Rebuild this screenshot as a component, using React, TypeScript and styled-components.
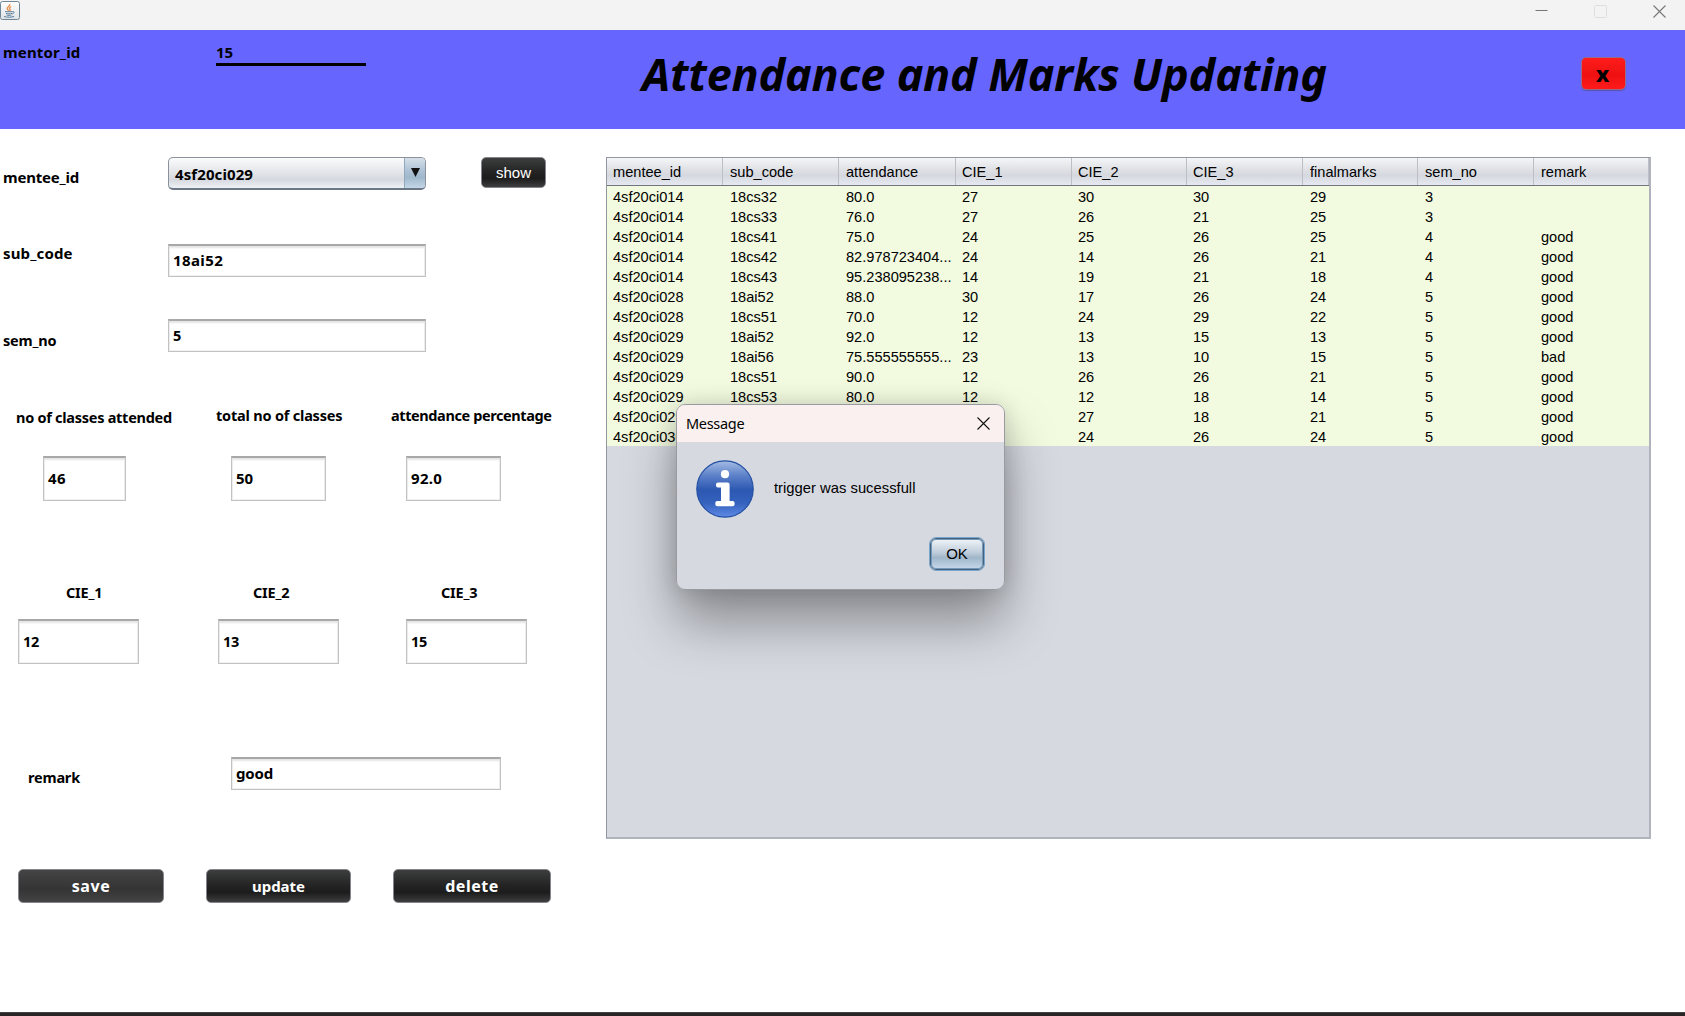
import React from "react";
import styled, { createGlobalStyle } from "styled-components";

const Global = createGlobalStyle`
  *{box-sizing:border-box}
  html,body{margin:0;background:#fff;overflow:hidden}
  body{font-family:"Liberation Sans",Arial,sans-serif;color:#000}
`;

const humanist = `"Noto Sans","Open Sans",sans-serif`;

const Window = styled.main`
  position: relative;
  width: 1685px;
  height: 1016px;
  display: flex;
  flex-direction: column;
  background: #fff;
  overflow: hidden;
`;
const TitleBar = styled.header`
  height: 30px;
  flex: none;
  display: flex;
  align-items: flex-start;
  justify-content: space-between;
  background: #f3f3f3;
`;
const WindowControls = styled.div`
  display: flex;
  gap: 46px;
  padding: 5px 19px 0 0;
`;
const Banner = styled.section`
  height: 99px;
  flex: none;
  display: flex;
  align-items: flex-start;
  background: #6666ff;
`;
const BannerLabel = styled.div`
  width: 216px;
  padding: 11px 0 0 3px;
`;
const MentorField = styled.div`
  width: 150px;
  height: 36px;
  padding-top: 11px;
  border-bottom: 3px solid #000;
`;
const Txt = styled.span<{ $size?: number; $ls?: number; $weight?: number }>`
  display: block;
  white-space: nowrap;
  font-family: ${humanist};
  font-weight: ${(p) => p.$weight ?? 700};
  font-size: ${(p) => p.$size ?? 14.5}px;
  line-height: 22px;
  letter-spacing: ${(p) => p.$ls ?? -0.2}px;
`;
const Heading = styled.h1`
  margin: 13px 0 0 276px;
  width: 699px;
  font: italic 700 45px/62px ${humanist};
  letter-spacing: -0.17px;
  white-space: nowrap;
`;
const CloseButton = styled.button`
  margin: 27px 0 0 240px;
  width: 45px;
  height: 33px;
  padding: 0 2px 2px 0;
  border: 1px solid #9a6a8c;
  border-radius: 5px;
  background: linear-gradient(#ff1c1c, #ee1111 55%, #ff1a1a);
  box-shadow: 0 1px 1px #5555aa;
  font: 800 22px/28px ${humanist};
`;
const Body = styled.div`
  flex: 1;
  display: flex;
  align-items: flex-start;
`;
const Form = styled.form`
  width: 606px;
  display: flex;
  flex-direction: column;
`;
const Line = styled.div<{ $h: number }>`
  height: ${(p) => p.$h}px;
  display: flex;
  align-items: flex-start;
`;
const Cell = styled.div<{ $w: number; $x?: number; $y?: number }>`
  width: ${(p) => p.$w}px;
  flex: none;
  padding: ${(p) => p.$y ?? 0}px 0 0 ${(p) => p.$x ?? 0}px;
`;
const Field = styled.div<{ $w: number; $h: number }>`
  width: ${(p) => p.$w}px;
  height: ${(p) => p.$h}px;
  display: flex;
  align-items: center;
  padding: 0 0 2px 4px;
  border: 1px solid #c2c2c2;
  border-top: 2px solid #a8a8a8;
  background: #fff;
  box-shadow: inset 0 2px 2px #e4e4e4, inset 0 0 0 1px #f1f1f1;
`;
const Combo = styled.div`
  width: 258px;
  height: 33px;
  display: flex;
  justify-content: space-between;
  border: 1px solid #8b929b;
  border-bottom: 2px solid #6b7784;
  border-radius: 5px;
  overflow: hidden;
  background: linear-gradient(#fbfbfc, #e3e5e9 48%, #d5d8de 72%, #eef1f6);
  padding-left: 6px;
`;
const ComboText = styled.div`
  padding-top: 5px;
`;
const ComboArrow = styled.div`
  width: 21px;
  border-left: 1px solid #8fa9be;
  background: linear-gradient(#d5e0ea, #abc0d3 45%, #a0b8cc 65%, #c4d7e8);
  display: flex;
  justify-content: center;
  padding-top: 10px;
`;
const DarkButton = styled.button<{ $w: number; $h: number; $hover?: boolean }>`
  width: ${(p) => p.$w}px;
  height: ${(p) => p.$h}px;
  display: flex;
  align-items: center;
  justify-content: center;
  padding: 0 0 1px;
  color: #fff;
  font: 15px "Liberation Sans", sans-serif;
  border: 1px solid #85858b;
  border-radius: 5px;
  background: ${(p) =>
    p.$hover
      ? "linear-gradient(#444, #343434 60%, #444)"
      : "linear-gradient(#3d3e3e, #252525 45%, #1c1c1c 70%, #3e3e3e)"};
`;
const Table = styled.section`
  margin-top: 28px;
  width: 1045px;
  height: 682px;
  background: #d6d9e0;
  border: 1px solid #9297a1;
  border-right: 2px solid #b0b3bb;
  border-bottom: 2px solid #b0b3bb;
`;
const columns = "116px 116px 117px 116px 115px 116px 115px 116px 115px";
const TableHead = styled.div`
  height: 28px;
  display: grid;
  grid-template-columns: ${columns};
  border-bottom: 1px solid #6f747e;
  background: linear-gradient(#f5f6f8, #e0e2e6 40%, #d5d8de 65%, #e6e9f1);
`;
const HeadCell = styled.div<{ $pad: number }>`
  padding: 1px 0 1px ${(p) => p.$pad}px;
  display: flex;
  align-items: center;
  font-size: 14.6px;
  border-right: 1px solid #bcbfc6;
`;
const Row = styled.div`
  height: 20px;
  display: grid;
  grid-template-columns: ${columns};
  background: #f2fadf;
`;
const RowCell = styled.div<{ $pad: number }>`
  height: 20px;
  padding-left: ${(p) => p.$pad}px;
  font-size: 14.6px;
  line-height: 22px;
  white-space: nowrap;
`;
const Taskbar = styled.footer`
  height: 4px;
  flex: none;
  background: #262424;
  border-top: 1px solid #444;
`;
const Dialog = styled.div`
  position: absolute;
  left: 676px;
  top: 404px;
  width: 329px;
  height: 186px;
  border: 1px solid #999ba0;
  border-radius: 9px;
  overflow: hidden;
  background: #d6d9e0;
`;
const DialogShadow = styled.div`
  position: absolute;
  left: 676px;
  top: 404px;
  width: 329px;
  height: 186px;
  border-radius: 9px;
  box-shadow: 0 32px 52px rgba(0, 0, 0, 0.36), 0 0 22px rgba(0, 0, 0, 0.15);
`;
const DialogTitle = styled.div`
  height: 37px;
  display: flex;
  justify-content: space-between;
  padding: 7px 14px 0 9px;
  background: #f9f0ef;
`;
const DialogContent = styled.div`
  height: 96px;
  display: flex;
  padding: 18px 0 0 19px;
  gap: 20px;
`;
const Message = styled.div`
  padding-top: 18px;
  font-size: 14.8px;
  line-height: 20px;
`;
const DialogActions = styled.div`
  display: flex;
  justify-content: flex-end;
  padding-right: 20px;
`;
const OkButton = styled.button`
  width: 54px;
  height: 32px;
  padding: 0 0 1px;
  font: 15px "Liberation Sans", sans-serif;
  border: 1px solid #45617b;
  border-radius: 6px;
  outline: 1px solid #7ba6cb;
  background: linear-gradient(#f0f4f8, #bfcddb 45%, #a0b6c9 62%, #c5d8ea);
  box-shadow: inset 0 0 0 1px #7299bc;
`;

const JavaIcon = () => (
  <svg width="20" height="21" viewBox="0 0 20 21" fill="none">
    <defs>
      <linearGradient id="tile" x2="0" y2="1">
        <stop stopColor="#fff" />
        <stop offset="1" stopColor="#dfe3e6" />
      </linearGradient>
    </defs>
    <rect x=".5" y="1.5" width="19" height="18" rx="2" fill="url(#tile)" stroke="#6d8798" />
    <path d="M9.800 4c.6 2.200-3.300 2.900-2.500 4.900.300.800 1 1.300 1.200 2M11.200 6.500c-1.500.8-2.200 1.700-1.300 2.700.5.600.2 1.200-.3 1.700" stroke="#e8914e" strokeWidth="1.400" />
    <path d="M5 11.700h7.500M6 13.400c1.700.600 4.500.500 6 0M6.500 15c1.500.500 3.700.5 5 0M12.400 11.700c2.200-.8 2.200 1.600-.2 2.300M4 16.500c2.700 1 8 .900 10-.1" stroke="#5c7f9c" />
  </svg>
);
const Cross = ({ color }: { color: string }) => (
  <svg width="13" height="13" viewBox="0 0 13 13" stroke={color} strokeWidth="1.100">
    <path d="M.5.500l12 12M12.500.500l-12 12" />
  </svg>
);
const InfoIcon = () => (
  <svg width="58" height="58" viewBox="0 0 58 58">
    <defs>
      <linearGradient id="info" x2="0" y2="1">
        <stop stopColor="#a5bce4" />
        <stop offset=".25" stopColor="#5f83ca" />
        <stop offset=".52" stopColor="#2c58b2" />
        <stop offset=".75" stopColor="#3462bd" />
        <stop offset="1" stopColor="#5e8ae6" />
      </linearGradient>
    </defs>
    <circle cx="29" cy="29" r="28.200" fill="url(#info)" stroke="#2450a2" strokeWidth="1.200" />
    <circle cx="29" cy="14.200" r="4.100" fill="#fff" />
    <path d="M22 22.500h9.600q2 0 2 2V41h3q2 0 2 2v1.300q0 2-2 2H21.300q-2 0-2-2V43q0-2 2-2H25V27.500h-3q-2 0-2-2v-1q0-2 2-2z" fill="#fff" />
  </svg>
);

const heads = ["mentee_id", "sub_code", "attendance", "CIE_1", "CIE_2", "CIE_3", "finalmarks", "sem_no", "remark"];
const cellPads = [6, 7, 7, 6, 6, 6, 7, 7, 7];
const rows = [
  ["4sf20ci014", "18cs32", "80.0", "27", "30", "30", "29", "3", ""],
  ["4sf20ci014", "18cs33", "76.0", "27", "26", "21", "25", "3", ""],
  ["4sf20ci014", "18cs41", "75.0", "24", "25", "26", "25", "4", "good"],
  ["4sf20ci014", "18cs42", "82.978723404...", "24", "14", "26", "21", "4", "good"],
  ["4sf20ci014", "18cs43", "95.238095238...", "14", "19", "21", "18", "4", "good"],
  ["4sf20ci028", "18ai52", "88.0", "30", "17", "26", "24", "5", "good"],
  ["4sf20ci028", "18cs51", "70.0", "12", "24", "29", "22", "5", "good"],
  ["4sf20ci029", "18ai52", "92.0", "12", "13", "15", "13", "5", "good"],
  ["4sf20ci029", "18ai56", "75.555555555...", "23", "13", "10", "15", "5", "bad"],
  ["4sf20ci029", "18cs51", "90.0", "12", "26", "26", "21", "5", "good"],
  ["4sf20ci029", "18cs53", "80.0", "12", "12", "18", "14", "5", "good"],
  ["4sf20ci029", "", "", "", "27", "18", "21", "5", "good"],
  ["4sf20ci030", "", "", "", "24", "26", "24", "5", "good"],
];

export default function App() {
  return (
    <Window>
      <Global />
      <TitleBar>
        <JavaIcon />
        <WindowControls>
          <svg width="13" height="13" stroke="#777"><path d="M.5 5.500h12" /></svg>
          <svg width="13" height="13" fill="none" stroke="#dedede"><rect x=".5" y=".5" width="12" height="12" rx="1" /></svg>
          <Cross color="#777" />
        </WindowControls>
      </TitleBar>
      <Banner>
        <BannerLabel><Txt $size={15} $ls={0.15}>mentor_id</Txt></BannerLabel>
        <MentorField><Txt $size={15}>15</Txt></MentorField>
        <Heading>Attendance and Marks Updating</Heading>
        <CloseButton>x</CloseButton>
      </Banner>
      <Body>
        <Form>
          <Line $h={113}>
            <Cell $w={168} $x={3} $y={37}><Txt $size={15} $ls={-0.2}>mentee_id</Txt></Cell>
            <Cell $w={313} $y={28}>
              <Combo>
                <ComboText><Txt $size={15} $ls={0.1}>4sf20ci029</Txt></ComboText>
                <ComboArrow><svg width="9" height="9"><path d="M0 0h9L4.500 9z" fill="#111" /></svg></ComboArrow>
              </Combo>
            </Cell>
            <Cell $w={66} $y={28}><DarkButton type="button" $w={65} $h={31}>show</DarkButton></Cell>
          </Line>
          <Line $h={77}>
            <Cell $w={168} $x={3}><Txt $size={15} $ls={0.15}>sub_code</Txt></Cell>
            <Cell $w={258} $y={2}><Field $w={258} $h={33}><Txt $size={15} $ls={0.4}>18ai52</Txt></Field></Cell>
          </Line>
          <Line $h={85}>
            <Cell $w={168} $x={3} $y={10}><Txt>sem_no</Txt></Cell>
            <Field $w={258} $h={33}><Txt>5</Txt></Field>
          </Line>
          <Line $h={52}>
            <Cell $w={216} $x={16} $y={2}><Txt $ls={-0.27}>no of classes attended</Txt></Cell>
            <Cell $w={175}><Txt $ls={-0.2}>total no of classes</Txt></Cell>
            <Cell $w={180}><Txt $ls={-0.4}>attendance percentage</Txt></Cell>
          </Line>
          <Line $h={125}>
            <Cell $w={231} $x={43}><Field $w={83} $h={45}><Txt $size={15} $ls={0.3}>46</Txt></Field></Cell>
            <Cell $w={175}><Field $w={95} $h={45}><Txt $size={15}>50</Txt></Field></Cell>
            <Field $w={95} $h={45}><Txt $size={15} $ls={0.3}>92.0</Txt></Field>
          </Line>
          <Line $h={38}>
            <Cell $w={253} $x={66}><Txt>CIE_1</Txt></Cell>
            <Cell $w={188}><Txt>CIE_2</Txt></Cell>
            <Cell $w={60}><Txt>CIE_3</Txt></Cell>
          </Line>
          <Line $h={138}>
            <Cell $w={218} $x={18}><Field $w={121} $h={45}><Txt>12</Txt></Field></Cell>
            <Cell $w={188}><Field $w={121} $h={45}><Txt>13</Txt></Field></Cell>
            <Field $w={121} $h={45}><Txt>15</Txt></Field>
          </Line>
          <Line $h={112}>
            <Cell $w={231} $x={28} $y={9}><Txt>remark</Txt></Cell>
            <Field $w={270} $h={33}><Txt $size={15}>good</Txt></Field>
          </Line>
          <Line $h={40}>
            <Cell $w={206} $x={18}><DarkButton type="button" $hover $w={146} $h={34}><Txt $size={16} $ls={0.6}>save</Txt></DarkButton></Cell>
            <Cell $w={187}><DarkButton type="button" $w={145} $h={34}><Txt $size={15} $ls={0}>update</Txt></DarkButton></Cell>
            <DarkButton type="button" $w={158} $h={34}><Txt $size={16} $ls={0.5}>delete</Txt></DarkButton>
          </Line>
        </Form>
        <Table>
          <TableHead>{heads.map((h, j) => <HeadCell key={h} $pad={cellPads[j]}>{h}</HeadCell>)}</TableHead>
          {rows.map((r, i) => (
            <Row key={i}>{r.map((c, j) => <RowCell key={j} $pad={cellPads[j]}>{c}</RowCell>)}</Row>
          ))}
        </Table>
      </Body>
      <Taskbar />
      <DialogShadow />
      <Dialog>
        <DialogTitle>
          <Txt $weight={400} $ls={-0.3}>Message</Txt>
          <Cell $w={13} $y={4}><Cross color="#111" /></Cell>
        </DialogTitle>
        <DialogContent>
          <InfoIcon />
          <Message>trigger was sucessfull</Message>
        </DialogContent>
        <DialogActions><OkButton>OK</OkButton></DialogActions>
      </Dialog>
    </Window>
  );
}
